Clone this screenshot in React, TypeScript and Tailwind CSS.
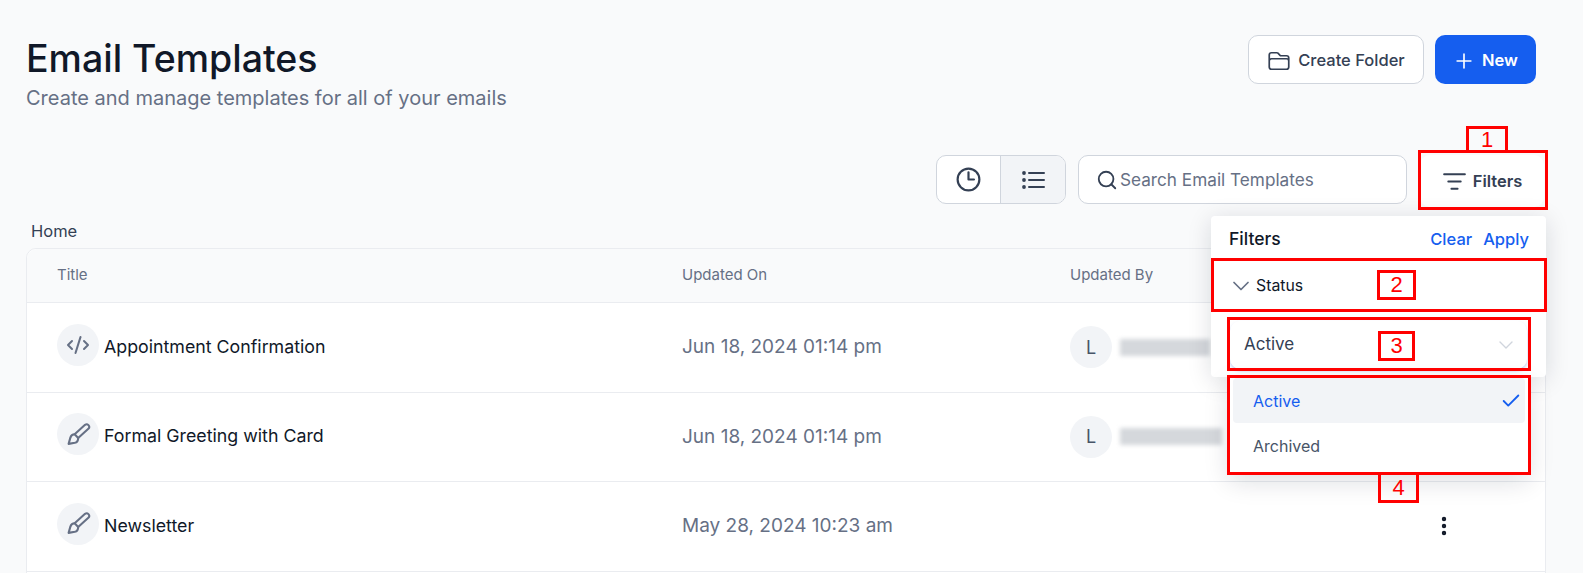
import { Check, ChevronDown, CodeXml, EllipsisVertical, ListFilter, Search } from "lucide-react";
import { HiOutlineClock, HiOutlineFolder, HiOutlinePlus } from "react-icons/hi2";

const rows = [
  { title: "Appointment Confirmation", date: "Jun 18, 2024 01:14 pm", code: true, user: "w-[90px]" },
  { title: "Formal Greeting with Card", date: "Jun 18, 2024 01:14 pm", code: false, user: "w-[102px]" },
  { title: "Newsletter", date: "May 28, 2024 10:23 am", code: false, user: "" },
];

const BrushIcon = () => (
  <svg viewBox="0 0 24 24" fill="none" stroke="currentColor" strokeWidth={2} strokeLinejoin="round" className="size-[25px]">
    <path d="M18.3 2.7a2.5 2.5 0 0 1 3.4 3.6l-10 9-3.4-3.6z" />
    <path d="M8.3 11.7C6 11.7 4.8 13 4.2 15l-1.7 6 6-1c2-.5 3.2-2.5 3.2-4.7" />
  </svg>
);

const ListIcon = () => (
  <svg viewBox="0 0 24 24" fill="none" stroke="currentColor" strokeWidth={2} strokeLinecap="round" className="size-[24px]">
    <path d="M8 5h15M8 12h15M8 19h15" />
    <circle cx="3" cy="5" r="1.9" fill="currentColor" stroke="none" />
    <circle cx="3" cy="12" r="1.9" fill="currentColor" stroke="none" />
    <circle cx="3" cy="19" r="1.9" fill="currentColor" stroke="none" />
  </svg>
);

const Marker = ({ className, label }: { className: string; label: string }) => (
  <div
    className={`absolute flex items-center justify-center border-[3px] border-[#ff0000] font-['Liberation_Sans',sans-serif] text-[22px] leading-none text-[#ff0000] ${className}`}
  >
    {label}
  </div>
);

const Frame = ({ className }: { className: string }) => (
  <div className={`absolute border-[3px] border-[#ff0000] ${className}`} />
);

export default function App() {
  return (
    <div className="relative h-screen w-full overflow-hidden bg-[#f9fafb] pl-[26px] pr-[37px] pt-[35px] font-['Inter',sans-serif] text-[#101828]">
      <div className="flex items-start justify-between pr-[10px]">
        <div>
          <h1 className="mb-[3px] text-[37.5px] font-medium leading-[47px]">Email Templates</h1>
          <p className="text-[20px] leading-[26px] text-[#667085]">
            Create and manage templates for all of your emails
          </p>
        </div>
        <div className="flex gap-[11px]">
          <button className="flex h-[49px] w-[176px] items-center justify-center gap-[7px] rounded-[10px] border border-[#d0d5dd] bg-white pt-[2px] text-[16.5px] font-medium text-[#344054]">
            <HiOutlineFolder className="size-[24px]" strokeWidth={1.7} />
            Create Folder
          </button>
          <button className="flex h-[49px] w-[101px] items-center justify-center gap-[7px] rounded-[10px] bg-[#155eef] pt-[2px] text-[16.5px] font-semibold text-white">
            <HiOutlinePlus className="size-[22px]" strokeWidth={1.8} />
            New
          </button>
        </div>
      </div>

      <div className="mt-[44px] flex justify-end gap-[12px] pr-[2px]">
        <div className="flex h-[49px] w-[130px] overflow-hidden rounded-[10px] border border-[#d0d5dd] bg-white text-[#344054]">
          <div className="flex w-[64px] items-center justify-center border-r border-[#d0d5dd]">
            <HiOutlineClock className="size-[29px]" strokeWidth={1.8} />
          </div>
          <div className="flex flex-1 items-center justify-center bg-[#f2f4f7]">
            <ListIcon />
          </div>
        </div>
        <div className="flex h-[49px] w-[329px] items-center gap-[2px] rounded-[10px] border border-[#d0d5dd] bg-white pl-[17px] pt-[1px] text-[17.2px] text-[#667085]">
          <Search className="size-[22px] text-[#344054]" strokeWidth={2} />
          Search Email Templates
        </div>
        <button className="ml-[1px] flex h-[52px] w-[124px] items-center justify-center gap-[6px] rounded-[10px] bg-white text-[16.5px] font-semibold text-[#344054]">
          <ListFilter className="size-[25px]" strokeWidth={1.8} />
          Filters
        </button>
      </div>

      <div className="mt-[12px] pl-[5px] text-[16.5px] leading-[24px] text-[#344054]">Home</div>

      <div className="mt-[5px] rounded-t-[10px] border border-[#eaecf0] bg-white">
        <div className="grid h-[54px] grid-cols-[625px_388px_1fr] items-center rounded-t-[10px] border-b border-[#eaecf0] bg-[#f9fafb] pl-[30px] text-[15px] text-[#667085]">
          <span>Title</span>
          <span>Updated On</span>
          <span>Updated By</span>
        </div>
        {rows.map((row) => (
          <div
            key={row.title}
            className="grid h-[89.5px] grid-cols-[625px_388px_1fr] items-center border-b border-[#eaecf0] pl-[30px]"
          >
            <div className="flex items-center gap-[5px] text-[17.8px]">
              <span className="mb-[5px] flex size-[42px] items-center justify-center rounded-full bg-[#f2f4f7] text-[#667085]">
                {row.code ? <CodeXml className="size-[24px]" strokeWidth={2} /> : <BrushIcon />}
              </span>
              {row.title}
            </div>
            <div className="text-[19px] text-[#667085]">{row.date}</div>
            <div className="relative flex items-center gap-[8px]">
              {row.user && (
                <>
                  <span className="flex size-[42px] items-center justify-center rounded-full bg-[#f2f4f7] text-[18px] text-[#475467]">
                    L
                  </span>
                  <span className={`h-[17px] bg-[#d5d8dc] blur-[2px] ${row.user}`} />
                </>
              )}
              {!row.user && (
                <EllipsisVertical className="absolute left-[362px] top-[-12px] size-[24px] text-[#101828]" strokeWidth={2.4} />
              )}
            </div>
          </div>
        ))}
        <div className="h-[40px]" />
      </div>

      {/* filter popover */}
      <div className="absolute left-[1211px] top-[216px] h-[161px] w-[335px] rounded-[4px] bg-white shadow-[0_4px_24px_rgba(16,24,40,0.14)]">
        <div className="flex items-center justify-between pl-[18px] pr-[17px] pt-[11px] font-medium leading-[24px]">
          <span className="text-[17.5px]">Filters</span>
          <span className="flex gap-[11px] text-[16.5px] text-[#155eef]">
            <span>Clear</span>
            <span>Apply</span>
          </span>
        </div>
        <div className="mt-[21px] flex items-center gap-[1px] pl-[16px] text-[15.8px] leading-[26px]">
          <ChevronDown className="size-[28px] text-[#667085]" strokeWidth={1.5} />
          Status
        </div>
        <div className="mx-[19px] mt-[21px] flex h-[48px] items-center justify-between rounded-[10px] bg-white pl-[14px] pr-[9px] text-[17px] text-[#344054] shadow-[0_2px_3px_rgba(90,120,220,0.35)]">
          Active
          <ChevronDown className="size-[24px] text-[#d0d5dd]" strokeWidth={1.4} />
        </div>
      </div>

      {/* select options */}
      <div className="absolute left-[1229px] top-[376px] h-[97px] w-[300px] bg-white px-[4px] pt-[2px] text-[16px] shadow-[0_8px_24px_rgba(16,24,40,0.14)]">
        <div className="flex h-[45px] items-center justify-between rounded-[4px] bg-[#f2f4f7] pl-[20px] pr-[3px] text-[#155eef]">
          Active
          <Check className="size-[22px]" strokeWidth={2} />
        </div>
        <div className="flex h-[45px] items-center pl-[20px] text-[#475467]">Archived</div>
      </div>

      {/* red annotations */}
      <Marker className="left-[1466px] top-[126px] h-[27px] w-[42px]" label="1" />
      <Frame className="left-[1418px] top-[150px] h-[60px] w-[130px]" />
      <Frame className="left-[1211px] top-[258px] h-[54px] w-[336px]" />
      <Marker className="left-[1377px] top-[270px] h-[30px] w-[39px]" label="2" />
      <Frame className="left-[1227px] top-[317px] h-[54px] w-[304px]" />
      <Marker className="left-[1378px] top-[331px] h-[30px] w-[37px]" label="3" />
      <Frame className="left-[1227px] top-[375px] h-[100px] w-[304px]" />
      <Marker className="left-[1378px] top-[472px] h-[31px] w-[41px]" label="4" />
    </div>
  );
}
